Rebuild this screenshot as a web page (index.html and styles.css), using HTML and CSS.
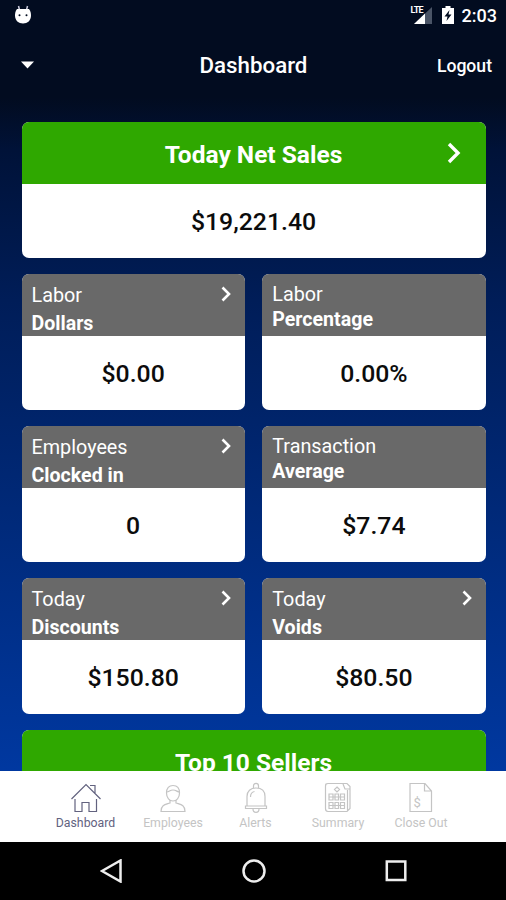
FILE: index.html
```
<!DOCTYPE html>
<html lang="en">

<head>
    <meta charset="utf-8">
    <meta name="viewport" content="width=device-width, initial-scale=1">
    <title>Dashboard</title>
    <link rel="stylesheet" href="styles.css">
</head>

<body>
    <div class="screen">
        <div class="status-bar">
            <svg class="debug-icon" width="18" height="20" viewBox="0 0 18 20">
                <path d="M4.500 1l1 4M13.500 1l-1 4" stroke="#ccd" stroke-width="1.500" />
                <path d="M3 4h12c1.500 2 2 4 2 6.500 0 5-3.500 8-8 8s-8-3-8-8C1 8 1.500 6 3 4z" fill="#fff" />
                <circle cx="5.500" cy="10.300" r="1" fill="#020c20" />
                <circle cx="12.500" cy="10.300" r="1" fill="#020c20" />
            </svg>
            <div class="status-right">
                <div class="signal">
                    <span class="lte">LTE</span>
                    <svg width="18" height="17" viewBox="0 0 18 17">
                        <path d="M18 0v17H0z" fill="#4a5466" />
                        <path d="M11 6.600V17H0z" fill="#fff" />
                    </svg>
                </div>
                <svg class="battery" width="12" height="18" viewBox="0 0 12 18">
                    <path d="M0 2h3.500V0h5v2H12v16H0z" fill="#fff" />
                    <path d="M7.500 4L2.500 10.500h3L4.500 15l5-6.500h-3z" fill="#020c20" />
                </svg>
                <span class="time">2:03</span>
            </div>
        </div>

        <div class="header">
            <svg class="dropdown" width="13" height="8" viewBox="0 0 13 8">
                <path d="M0 .5h13L6.500 7.500z" fill="#fff" />
            </svg>
            <h1>Dashboard</h1>
            <span class="logout">Logout</span>
        </div>

        <div class="content">
            <div class="card wide">
                <div class="card-top green">
                    <span>Today Net Sales</span>
                    <svg class="arrow" width="14" height="22" viewBox="0 0 14 22"><path d="M2 2l9 9-9 9" /></svg>
                </div>
                <div class="card-value">$19,221.40</div>
            </div>

            <div class="card">
                <div class="card-top linked">
                    <div>Labor<b>Dollars</b></div>
                    <svg class="arrow" width="10" height="16" viewBox="0 0 10 16"><path d="M1.500 1.500L8 8l-6.500 6.500" /></svg>
                </div>
                <div class="card-value">$0.00</div>
            </div>
            <div class="card">
                <div class="card-top">
                    <div>Labor<b>Percentage</b></div>
                </div>
                <div class="card-value">0.00%</div>
            </div>

            <div class="card">
                <div class="card-top linked">
                    <div>Employees<b>Clocked in</b></div>
                    <svg class="arrow" width="10" height="16" viewBox="0 0 10 16"><path d="M1.500 1.500L8 8l-6.500 6.500" /></svg>
                </div>
                <div class="card-value">0</div>
            </div>
            <div class="card">
                <div class="card-top">
                    <div>Transaction<b>Average</b></div>
                </div>
                <div class="card-value">$7.74</div>
            </div>

            <div class="card">
                <div class="card-top linked">
                    <div>Today<b>Discounts</b></div>
                    <svg class="arrow" width="10" height="16" viewBox="0 0 10 16"><path d="M1.500 1.500L8 8l-6.500 6.500" /></svg>
                </div>
                <div class="card-value">$150.80</div>
            </div>
            <div class="card">
                <div class="card-top linked">
                    <div>Today<b>Voids</b></div>
                    <svg class="arrow" width="10" height="16" viewBox="0 0 10 16"><path d="M1.500 1.500L8 8l-6.500 6.500" /></svg>
                </div>
                <div class="card-value">$80.50</div>
            </div>

            <div class="card wide">
                <div class="card-top green">
                    <span>Top 10 Sellers</span>
                </div>
                <div class="card-value"></div>
            </div>
        </div>

        <div class="tabs">
            <div class="tab active">
                <svg width="32" height="32" viewBox="0 0 32 32">
                    <path d="M1.500 17L16 2.500 30.500 17M5 17v12.500h7v-9h7v9h7.500V17M20 3.500h5V11" />
                </svg>
                <span>Dashboard</span>
            </div>
            <div class="tab">
                <svg width="32" height="32" viewBox="0 0 32 32">
                    <path d="M9.500 11c0-5 2.500-7.500 6.500-7.500s6.500 2.500 6.500 7.500-3 8-6.500 8-6.500-3-6.500-8z" />
                    <path d="M9.500 10c3 0 3-2 6.500-2s4 2 6.500 2M13 18v3c-4 1.500-9 1.500-9 8.500h24c0-7-5-7-9-8.500v-3" />
                </svg>
                <span>Employees</span>
            </div>
            <div class="tab">
                <svg width="32" height="32" viewBox="0 0 32 32">
                    <path d="M13.500 6V4c0-3.500 5-3.500 5 0v2" />
                    <path d="M5.500 26.500V24H7V14.500C7 9 10.500 6 16 6s9 3 9 8.500V24h1.500v2.500zM7 24h18M13 27c0 4.500 6 4.500 6 0M10.500 15c0-3 1.500-5 4-5.500" />
                </svg>
                <span>Alerts</span>
            </div>
            <div class="tab">
                <svg width="32" height="32" viewBox="0 0 32 32">
                    <path d="M6 1.500h19l3 3v22l-3 3H6c-2 0-2.500-1-2.500-3V4c0-2 .5-2.500 2.500-2.500zM25.500 8v21M21 2l2 5h5M15 5l2.500 2.500L15 10l-2.500-2.500z" />
                    <path d="M7 12h4v6H7zM13 12h3.500v6H13zM18.500 12h4v6h-4zM7 20.500h4v6H7zM13 20.500h3.500v6H13zM18.500 20.500h4v6h-4zM7 15h15.500M7 23.500h15.500" />
                </svg>
                <span>Summary</span>
            </div>
            <div class="tab">
                <svg width="32" height="32" viewBox="0 0 32 32">
                    <path d="M5 1.500h15l6.500 7.500v20.500H5zM19.500 1.500V9h7" />
                    <text x="8.500" y="25">$</text>
                </svg>
                <span>Close Out</span>
            </div>
        </div>

        <div class="nav-bar">
            <svg width="24" height="24" viewBox="0 0 24 24"><path d="M20.500 1.500v21L2 12z" /></svg>
            <svg width="24" height="24" viewBox="0 0 24 24"><circle cx="12" cy="12" r="10.500" /></svg>
            <svg width="24" height="24" viewBox="0 0 24 24"><path d="M2.800 2.500h18.500v18.500H2.800z" /></svg>
        </div>
    </div>
</body>

</html>
```
FILE: styles.css
```
* {
    box-sizing: border-box;
}

body {
    margin: 0;
    font-family: Roboto, Arial, sans-serif;
    color: #fff;
}

.screen {
    display: flex;
    flex-direction: column;
    height: 900px;
    overflow: hidden;
    background: linear-gradient(#020c20 98px, #001238 150px, #001d58 300px, #0038a0 770px);
}

.status-bar {
    display: flex;
    justify-content: space-between;
    height: 32px;
    padding: 5px 9px 0 14px;
}

.status-right {
    display: flex;
}

.signal {
    display: flex;
    position: relative;
    margin: 2px 10px 0 0;
}

.lte {
    position: absolute;
    left: -3px;
    top: -2px;
    font-size: 9px;
    line-height: 10px;
    font-weight: 700;
    letter-spacing: -0.8px;
}

.battery {
    margin: 1px 8px 0 0;
}

.time {
    font-size: 18px;
    line-height: 22px;
    font-weight: 500;
}

.header {
    display: grid;
    grid-template-columns: 1fr auto 1fr;
    align-items: center;
    height: 66px;
    padding: 0 14px 0 15px;
}

.dropdown {
    margin-left: 6px;
}

.header h1 {
    margin: 0;
    font-size: 22.3px;
    font-weight: 500;
}

.logout {
    justify-self: end;
    padding-top: 1px;
    font-size: 17.6px;
    font-weight: 500;
}

.content {
    display: grid;
    grid-template-columns: 1fr 1fr;
    grid-auto-rows: 136px;
    gap: 16px 17.5px;
    flex: none;
    height: 673px;
    padding: 24.4px 20.5px 0 21.5px;
    overflow: hidden;
}

.card {
    display: flex;
    flex-direction: column;
    border-radius: 7px;
    overflow: hidden;
    background: #fff;
}

.wide {
    grid-column: span 2;
}

.card-top {
    display: flex;
    justify-content: space-between;
    height: 61.5px;
    padding: 7.500px 14px 0 10px;
    background: #696969;
    font-size: 19.8px;
    line-height: 25px;
}

.card-top b {
    display: block;
    font-size: 19.6px;
}

.linked {
    line-height: 28px;
}

.green {
    position: relative;
    justify-content: center;
    align-items: center;
    padding: 3px 0 0;
    background: #2fa800;
    font-size: 24.5px;
    font-weight: 700;
}

.arrow {
    margin-top: 4px;
    fill: none;
    stroke: #fff;
    stroke-width: 2.600;
}

.green .arrow {
    position: absolute;
    right: 25px;
    top: 20px;
    margin: 0;
    stroke-width: 3.400;
}

.card-value {
    display: flex;
    flex: 1;
    align-items: center;
    justify-content: center;
    padding-top: 1px;
    color: #0c0c0c;
    font-size: 24.8px;
    font-weight: 500;
}

.tabs {
    display: grid;
    grid-template-columns: 88px 87px 78px 87px 79px;
    flex: none;
    height: 71px;
    padding: 11px 0 0 41.5px;
    background: #fff;
    color: #c4c4c4;
}

.tab {
    display: flex;
    flex-direction: column;
    align-items: center;
    font-size: 12.3px;
    line-height: 18px;
}

.tab svg {
    fill: none;
    stroke: currentColor;
    stroke-width: 1.200;
}

.tab text {
    fill: currentColor;
    stroke: none;
    font-size: 13px;
}

.active {
    color: #62627f;
}

.nav-bar {
    display: flex;
    justify-content: center;
    align-items: center;
    gap: 118px;
    height: 58px;
    padding-left: 2px;
    background: #000;
}

.nav-bar svg {
    fill: none;
    stroke: #eee;
    stroke-width: 2.500;
}
```
